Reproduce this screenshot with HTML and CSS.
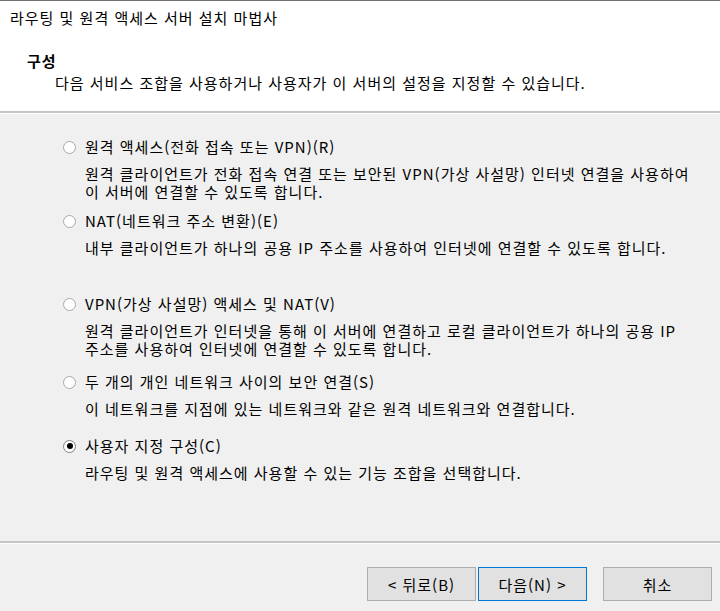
FILE: index.html
```html
<!DOCTYPE html>
<html lang="ko">
<head>
<meta charset="utf-8">
<title>라우팅 및 원격 액세스 서버 설치 마법사</title>
<link rel="stylesheet" href="styles.css">
</head>
<body>
<div class="window">
  <header class="header">
    <div class="title">라우팅 및 원격 액세스 서버 설치 마법사</div>
    <div class="heading">구성</div>
    <div class="subheading">다음 서비스 조합을 사용하거나 사용자가 이 서버의 설정을 지정할 수 있습니다.</div>
  </header>
  <main class="content">
    <div class="option opt1">
      <div class="label"><span class="radio"></span><span>원격 액세스(전화 접속 또는 VPN)(R)</span></div>
      <div class="desc">원격 클라이언트가 전화 접속 연결 또는 보안된 VPN(가상 사설망) 인터넷 연결을 사용하여<br>이 서버에 연결할 수 있도록 합니다.</div>
    </div>
    <div class="option opt2">
      <div class="label"><span class="radio"></span><span>NAT(네트워크 주소 변환)(E)</span></div>
      <div class="desc">내부 클라이언트가 하나의 공용 IP 주소를 사용하여 인터넷에 연결할 수 있도록 합니다.</div>
    </div>
    <div class="option opt3">
      <div class="label"><span class="radio"></span><span>VPN(가상 사설망) 액세스 및 NAT(V)</span></div>
      <div class="desc">원격 클라이언트가 인터넷을 통해 이 서버에 연결하고 로컬 클라이언트가 하나의 공용 IP<br>주소를 사용하여 인터넷에 연결할 수 있도록 합니다.</div>
    </div>
    <div class="option opt4">
      <div class="label"><span class="radio"></span><span>두 개의 개인 네트워크 사이의 보안 연결(S)</span></div>
      <div class="desc">이 네트워크를 지점에 있는 네트워크와 같은 원격 네트워크와 연결합니다.</div>
    </div>
    <div class="option opt5">
      <div class="label"><span class="radio checked"></span><span>사용자 지정 구성(C)</span></div>
      <div class="desc">라우팅 및 원격 액세스에 사용할 수 있는 기능 조합을 선택합니다.</div>
    </div>
  </main>
  <footer class="footer">
    <div class="buttons">
      <button class="btn">&lt; 뒤로(B)</button>
      <button class="btn default">다음(N) &gt;</button>
      <button class="btn cancel">취소</button>
    </div>
  </footer>
</div>
</body>
</html>
```

FILE: styles.css
```css
html, body {
  margin: 0;
  padding: 0;
}
body {
  background: #f0f0f0;
  font-family: "Noto Sans CJK KR", "Noto Sans", sans-serif;
  font-size: 15px;
  letter-spacing: 1px;
  color: #000;
  width: 720px;
  height: 611px;
  overflow: hidden;
}
.window {
  border-top: 1px solid #707070;
  height: 610px;
  display: flex;
  flex-direction: column;
}
.header {
  background: #fff;
  height: 112px;
  flex: none;
  border-bottom: 2px solid #c4c4c4;
  box-sizing: border-box;
  padding: 7px 0 0 10px;
}
.title {
  line-height: 20px;
}
.heading {
  font-weight: bold;
  margin: 23px 0 0 17px;
  line-height: 20px;
}
.subheading {
  margin: 2px 0 0 45px;
  line-height: 20px;
}
.content {
  border-top: 1px solid #fff;
  padding: 23px 0 0 63px;
  flex: 1;
}
.option .label {
  display: flex;
  align-items: center;
  line-height: 20px;
}
.radio {
  width: 13px;
  height: 13px;
  border-radius: 50%;
  box-sizing: border-box;
  border: 1px solid #a8a8a8;
  background: #fff;
  margin-right: 9px;
  position: relative;
  flex: none;
}
.radio.checked {
  border-color: #808080;
}
.radio.checked::after {
  content: "";
  position: absolute;
  left: 2.5px;
  top: 2.5px;
  width: 6px;
  height: 6px;
  border-radius: 50%;
  background: #000;
}
.desc {
  margin: 8px 0 0 22px;
  line-height: 18px;
}
.opt2 { margin-top: 10px; }
.opt3 { margin-top: 37px; }
.opt4 { margin-top: 14px; }
.opt5 { margin-top: 18px; }
.footer {
  border-top: 2px solid #c4c4c4;
  box-shadow: inset 0 1px 0 #fff;
  height: 70px;
  flex: none;
  box-sizing: border-box;
  padding: 24px 8px 0 0;
}
.buttons {
  display: flex;
  justify-content: flex-end;
}
.btn {
  width: 109px;
  height: 34px;
  box-sizing: border-box;
  background: #e1e1e1;
  border: 1px solid #adadad;
  font-family: inherit;
  font-size: 15px;
  letter-spacing: 1px;
  color: #000;
  padding: 0;
  margin: 0;
}
.btn.default {
  border-color: #0078d7;
  margin-left: 2px;
}
.btn.cancel {
  margin-left: 16px;
}
```
